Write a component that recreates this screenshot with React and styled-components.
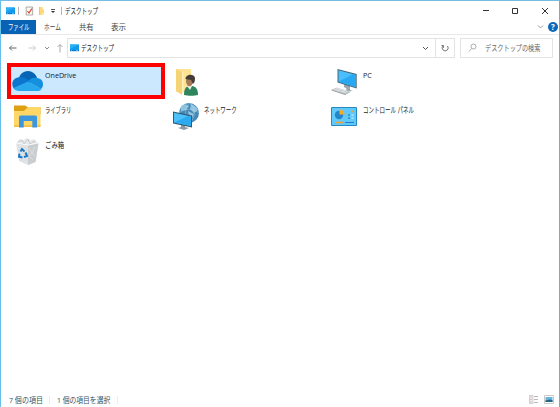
import styled, { createGlobalStyle } from "styled-components";

const GlobalStyle = createGlobalStyle`
  * {
    box-sizing: border-box;
  }
  body {
    margin: 0;
    overflow: hidden;
    background: #fff;
    font-family: "Open Sans", "Noto Sans CJK JP", sans-serif;
  }
  svg {
    display: block;
    flex: none;
  }
`;

const Window = styled.div`
  width: 560px;
  height: 407px;
  display: flex;
  flex-direction: column;
  background: #fff;
  border-top: 1px solid #78bce6;
  border-left: 1px solid #66c0ea;
  border-right: 1px solid #7ba6d8;
`;

const TextBox = styled.span`
  display: block;
  flex: none;
  width: ${({ $width }) => $width}px;
  height: 12px;
  line-height: 12px;
  font-size: ${({ $size }) => $size || 8}px;
  color: ${({ $color }) => $color || "#202020"};
  white-space: nowrap;
`;

const Narrow = styled.span`
  display: inline-block;
  line-height: 12px;
  vertical-align: top;
  transform: scaleX(${({ $scale }) => $scale || 1});
  transform-origin: left center;
`;

const TitleBar = styled.header`
  height: 19px;
  flex: none;
  display: flex;
  align-items: center;
  padding-left: 4px;
`;

const Divider = styled.span`
  width: 1px;
  height: ${({ $height }) => $height || 8}px;
  flex: none;
  background: ${({ $color }) => $color || "#b4b4b4"};
  margin: 0 ${({ $right }) => $right || 0}px 0 ${({ $left }) => $left || 0}px;
`;

const QuickAccess = styled.div`
  display: flex;
  align-items: center;
  gap: 4px;
`;

const WindowButtons = styled.div`
  display: flex;
  margin-left: auto;
`;

const Tabs = styled.nav`
  height: 15px;
  flex: none;
  display: flex;
  align-items: center;
  border-bottom: 1px solid #e9e9e9;
`;

const FileTab = styled.div`
  width: 35px;
  height: 14px;
  padding: 1px 0 0 7px;
  background: #0863b5;
`;

const Tab = styled.div`
  margin-left: ${({ $gap }) => $gap}px;
`;

const TabsEnd = styled.div`
  display: flex;
  align-items: center;
  gap: 4px;
  margin-left: auto;
  padding-right: 1px;
`;

const HelpMark = styled.div`
  width: 10px;
  height: 10px;
  border-radius: 50%;
  background: #0c68bb;
  color: #fff;
  font-size: 8px;
  font-weight: 700;
  line-height: 10px;
  text-align: center;
`;

const AddressRow = styled.div`
  height: 25px;
  flex: none;
  display: flex;
  align-items: center;
  padding: 0 6px 0 3px;
`;

const AddressBar = styled.div`
  width: 388px;
  height: 20px;
  display: flex;
  align-items: center;
  padding-left: 1px;
  border: 1px solid #e3e3e3;
`;

const AddressButtons = styled.div`
  display: flex;
  align-items: center;
  height: 18px;
  margin-left: auto;
`;

const SearchBox = styled.div`
  width: 93px;
  height: 20px;
  display: flex;
  align-items: center;
  margin-left: auto;
  border: 1px solid #e3e3e3;
`;

const Content = styled.main`
  flex: 1;
  padding: 2px 0 0 6px;
`;

const Items = styled.div`
  display: grid;
  grid-template-columns: 159px 159px 150px;
  grid-template-rows: 37px 35px 35px;
  align-items: end;
`;

const Item = styled.div`
  height: 35px;
  display: flex;
  padding: 0 0 0 4px;
`;

const SelectedItem = styled(Item)`
  width: 158px;
  height: 36px;
  padding: 0;
  background: #cce8ff;
  border: 4px solid #fe0000;
`;

const ItemLabel = styled.div`
  padding-top: ${({ $top }) => $top}px;
`;

const StatusBar = styled.footer`
  height: 15px;
  flex: none;
  display: flex;
  align-items: center;
  padding: 0 5px 0 8px;
`;

const ViewButtons = styled.div`
  display: flex;
  gap: 5px;
  margin-left: auto;
`;

const Text = ({ children, width, scale, size, color }) => (
  <TextBox $width={width} $size={size} $color={color}>
    <Narrow $scale={scale}>{children}</Narrow>
  </TextBox>
);

const Glyph = ({ w, h, d, color = "#333", stroke = 1 }) => (
  <svg width={w} height={h} viewBox={`0 0 ${w} ${h}`}>
    <path d={d} fill="none" stroke={color} strokeWidth={stroke} />
  </svg>
);

const DesktopIcon = () => (
  <svg width="11" height="10" viewBox="0 0 11 10">
    <path d="M1 1.5h9v6.5H1z" fill="#129bea" />
    <path d="M1 1.5h9L1 6z" fill="#29aff6" />
    <path d="M1 7h9v1.2H1z" fill="#0879cc" />
    <path d="M2 7.5h1M7 7.5h2" stroke="#9bdcff" strokeWidth=".6" />
  </svg>
);

const PropertiesIcon = () => (
  <svg width="9" height="10" viewBox="0 0 9 10">
    <path d="M1.2 1h6.5v8H1.2z" fill="#fcfaf9" stroke="#9a9291" strokeWidth=".8" />
    <path d="M2.5 5l1.5 2 2.8-4.3" fill="none" stroke="#db4b32" strokeWidth="1.2" />
  </svg>
);

const SmallFolderIcon = () => (
  <svg width="7" height="10" viewBox="0 0 7 10">
    <path d="M1 1h3.7v2.4H6V9H1z" fill="#ffd978" />
    <path d="M1 1h1v8H1z" fill="#f3c55b" />
    <path d="M4 7h2v2H4z" fill="#ffe8a8" />
  </svg>
);

const OneDriveIcon = () => (
  <svg width="34" height="27" viewBox="0 0 34 27">
    <path d="M8 12c0-4 4-8 9-8 4 0 8 3 9 7l-7 5z" fill="#0864b5" />
    <path d="M7 10.5c4-1 7 0 10 2.5l4 2-14 8C3 23 1.3 20 1.3 17c0-3.5 2.5-6 5.7-6.5z" fill="#0c75cd" />
    <path d="M17 14.5c2-3 5-4.500 9-3.5 4 .3 6 3 6 6.5 0 2-1 4-2 4.5z" fill="#1490df" />
    <path d="M2.5 21L17 14.5 30.5 22c-1 1.5-2 2-4 2H8c-2.5 0-4.5-1-5.5-3z" fill="#29a7ed" />
  </svg>
);

const UserFolderIcon = () => (
  <svg width="34" height="35" viewBox="0 0 34 35">
    <path d="M6 5h15v23H6z" fill="#ffe394" />
    <path d="M6 5l6 3v23l-6-4z" fill="#f5d478" />
    <path d="M12 8h1.5v21H12z" fill="#fff0b9" />
    <path d="M14 31c0-8 3-9 7-9s7 2 7 9c-4 1-10 1-14 0z" fill="#2e845d" />
    <path d="M17 22l3 4 2-4z" fill="#edf4ea" />
    <ellipse cx="19.500" cy="17" rx="3.5" ry="5.3" fill="#a67b5c" />
    <path d="M15.5 15c0-5 8.500-6 9.500-1 0 4-1 5-2 6l-2-4z" fill="#443c37" />
  </svg>
);

const PcIcon = () => (
  <svg width="34" height="35" viewBox="0 0 34 35">
    <path d="M15 20l6 2v4l3 1-9 0 3-2-3-2z" fill="#9aa8af" />
    <path d="M8.5 5L27.7 10v14.5L8.5 18.5z" fill="#456674" />
    <path d="M9.5 6.3L27 11v12.3L9.5 17.8z" fill="#4abfff" />
    <path d="M9.5 17.8L24 10.2 27 11v12.3z" fill="#29a8f2" />
    <path d="M2.5 25.5l5-2 14 4-5 3z" fill="#c5cacd" />
    <path d="M2.5 25.5v1L16 31l5.5-3v-.5l-5 2.5z" fill="#9da4a8" />
    <path d="M5 25l12 3.6M7 24l12 3.5M8 27l4-2.5M13 28l4-2" stroke="#eef1f2" strokeWidth=".5" />
  </svg>
);

const LibraryIcon = () => (
  <svg width="34" height="35" viewBox="0 0 34 35">
    <path d="M3 6.5h11l2.5 1.5H29.5V15H3z" fill="#dda013" />
    <path d="M3 12h10l4-4h12.5v19H3z" fill="#ffd768" />
    <path d="M3 26h26.5v2H3z" fill="#f5c34c" />
    <path d="M8 18q0-1.5 1.5-1.5h15q1.5 0 1.5 1.5v10.5h-4.7v-6.5h-8.6v6.5H8z" fill="#3c96db" />
  </svg>
);

const NetworkIcon = () => (
  <svg width="34" height="35" viewBox="0 0 34 35">
    <circle cx="19" cy="14" r="10" fill="#4688b5" />
    <path d="M13 6c4-2 4 1 6 1l-3 4-5 1c-1-3 0-5 2-6zM21 5c3 1 6 3 7 6l-4 3-4-4zM18 12l6 3-4 8z" fill="#8fc4df" />
    <path d="M9 14c6-5 13-5 20 0M20 4c-6 6-6 13 0 20M20 4c6 6 6 13 0 20" fill="none" stroke="#b8d9e8" strokeWidth=".4" />
    <path d="M11 25h4v3l4 1-5 2-6-2 3-1z" fill="#8b9ba3" />
    <path d="M3 12.5l19 4v12L3 24.5z" fill="#315a74" />
    <path d="M4 13.800l17 3.7V27L4 23.500z" fill="#4cc1fa" />
    <path d="M21 17.5V27L4 23.5l14-6.500z" fill="#2baaf0" />
  </svg>
);

const ControlPanelIcon = () => (
  <svg width="34" height="35" viewBox="0 0 34 35">
    <rect x="2" y="8" width="26" height="19" rx="1" fill="#258ac4" />
    <path d="M3 9h24v17H3z" fill="#61c9fa" />
    <circle cx="10" cy="16" r="4.2" fill="#2386cc" />
    <path d="M10.5 15.5V10.5a5 5 0 0 1 5 5z" fill="#f6ad26" />
    <path d="M19 16h2M19 19h2" stroke="#176c9e" />
    <path d="M22.5 16h2M22.5 19h2" stroke="#e5f8ff" />
    <path d="M23 12.5h2M6 23.5h8" stroke="#f4a02b" strokeWidth="1.5" />
    <path d="M16 23.5h9" stroke="#267bce" />
  </svg>
);

const BinIcon = () => (
  <svg width="34" height="35" viewBox="0 0 34 35">
    <path d="M5.5 9l3-4 4 1 3-2 4 2 4-1 4 5-4 4H8z" fill="#e9eaec" />
    <path d="M7 8l4-2 2 4 4-5 2 5 4-3 2 3" fill="none" stroke="#b4b8bc" strokeWidth=".7" />
    <path d="M5 9l12 2 10.5-2-3 19-7.5 3-9-4z" fill="#dfe2e5" />
    <path d="M17 11l10.5-2-3 19-7.5 3z" fill="#c9cdd0" />
    <path d="M5 9l12 2 10.5-2" fill="none" stroke="#f7f8f9" />
    <path d="M18 14l3 5-3 3 4 4M24 13l-3 6 3 3" fill="none" stroke="#e0e3e5" strokeWidth=".8" />
    <path d="M9.5 17.5l1.500-2.500 2.500 2.500M14.500 18.500l1.500 3.500-3 1M11.500 23.500l-3.500-.8.5-3" fill="none" stroke="#1678c9" strokeWidth="2" />
  </svg>
);

const DetailsIcon = () => (
  <svg width="10" height="9" viewBox="0 0 10 9">
    <path d="M.5.5H4v8H.5z" fill="#eee" stroke="#c0c0c0" strokeWidth=".7" />
    <path d="M1.5 2h1M1.5 4.5h1M1.5 7h1" stroke="#d09087" />
    <path d="M5 1.5h4M5 4.5h4M5 7.5h4" stroke="#a7a7a7" strokeWidth=".8" />
  </svg>
);

const ThumbnailIcon = () => (
  <svg width="10" height="9" viewBox="0 0 10 9">
    <path d="M.5.5h9v8h-9z" fill="#fff" stroke="#bbb" strokeWidth=".8" />
    <path d="M1.5 2h7v5h-7z" fill="#69b5df" />
    <path d="M1.5 5.5l4-1 3 .5v2h-7z" fill="#28647d" />
  </svg>
);

const items = [
  { icon: UserFolderIcon },
  { icon: PcIcon, label: "PC", width: 10, size: 7.5, scale: 0.95 },
  { icon: LibraryIcon, label: "ライブラリ", width: 27, scale: 0.66 },
  { icon: NetworkIcon, label: "ネットワーク", width: 33, scale: 0.68 },
  { icon: ControlPanelIcon, label: "コントロール パネル", width: 53, scale: 0.69 },
  { icon: BinIcon, label: "ごみ箱", width: 22, scale: 0.8 },
];

const App = () => {
  return (
    <>
      <GlobalStyle />
      <Window>
        <TitleBar>
          <DesktopIcon />
          <Divider $left={2} $right={6} />
          <QuickAccess>
            <PropertiesIcon />
            <SmallFolderIcon />
            <svg width="8" height="8" viewBox="0 0 8 8">
              <path d="M2 2.5h4" stroke="#555" />
              <path d="M2 4h4L4 6z" fill="#333" />
            </svg>
          </QuickAccess>
          <Divider $left={4} $right={3} />
          <Text width={60} scale={0.69}>デスクトップ</Text>
          <WindowButtons>
            <Glyph w={29} h={18} d="M11 8.5h6" />
            <Glyph w={29} h={18} d="M11.5 6.5h5v5h-5z" />
            <Glyph w={29} h={18} d="M12 6l6 6M18 6l-6 6" />
          </WindowButtons>
        </TitleBar>
        <Tabs>
          <FileTab>
            <Text width={22} scale={0.67} color="#fff">ファイル</Text>
          </FileTab>
          <Tab $gap={8}>
            <Text width={18} scale={0.71} color="#444">ホーム</Text>
          </Tab>
          <Tab $gap={17}>
            <Text width={15} scale={0.92} color="#444">共有</Text>
          </Tab>
          <Tab $gap={17}>
            <Text width={16} scale={0.94} color="#444">表示</Text>
          </Tab>
          <TabsEnd>
            <Glyph w={7} h={6} d="M1 1.5l2.5 2.5L6 1.5" color="#999" />
            <HelpMark>?</HelpMark>
          </TabsEnd>
        </Tabs>
        <AddressRow>
          <Glyph w={14} h={12} d="M5.5 6h7M8 3.5L5.5 6 8 8.5" color="#666" />
          <Glyph w={18} h={12} d="M10.5 6h7M15 3.5l2.5 2.5-2.5 2.5" color="#ccc" />
          <Glyph w={18} h={12} d="M9 5l2 2 2-2" color="#888" />
          <Glyph w={13} h={12} d="M6 2.5v8M3.5 5L6 2.5 8.5 5" color="#aaa" />
          <AddressBar>
            <DesktopIcon />
            <Divider $color="transparent" />
            <Text width={60} scale={0.69}>デスクトップ</Text>
            <AddressButtons>
              <Glyph w={17} h={12} d="M5 5l2.5 2.5L10 5" color="#555" />
              <Divider $height={18} $color="#e3e3e3" />
              <Glyph w={18} h={12} d="M11.5 4A3 3 0 1 1 7 3.8M5.5 3.5h2v2.3" color="#777" />
            </AddressButtons>
          </AddressBar>
          <SearchBox>
            <Glyph w={24} h={12} d="M12.5 2a2.5 2.5 0 1 1 0 5a2.5 2.5 0 1 1 0-5M10.5 6.5L8 9.5" color="#999" stroke={0.8} />
            <Text width={54} scale={0.77} color="#666">デスクトップの検索</Text>
          </SearchBox>
        </AddressRow>
        <Content>
          <Items>
            <SelectedItem>
              <OneDriveIcon />
              <ItemLabel $top={2}>
                <Text width={40} size={7.5} scale={0.95}>OneDrive</Text>
              </ItemLabel>
            </SelectedItem>
            {items.map(({ icon: Icon, label, width, scale, size }) => (
              <Item key={label || "user"}>
                <Icon />
                {label && (
                  <ItemLabel $top={5}>
                    <Text width={width} scale={scale} size={size}>{label}</Text>
                  </ItemLabel>
                )}
              </Item>
            ))}
          </Items>
        </Content>
        <StatusBar>
          <Text width={36} scale={0.88} color="#315365">7 個の項目</Text>
          <Divider $left={4} $right={7} $color="#eee" />
          <Text width={56} scale={0.85} color="#315365">1 個の項目を選択</Text>
          <Divider $left={4} $color="#eee" />
          <ViewButtons>
            <DetailsIcon />
            <ThumbnailIcon />
          </ViewButtons>
        </StatusBar>
      </Window>
    </>
  );
};

export default App;
